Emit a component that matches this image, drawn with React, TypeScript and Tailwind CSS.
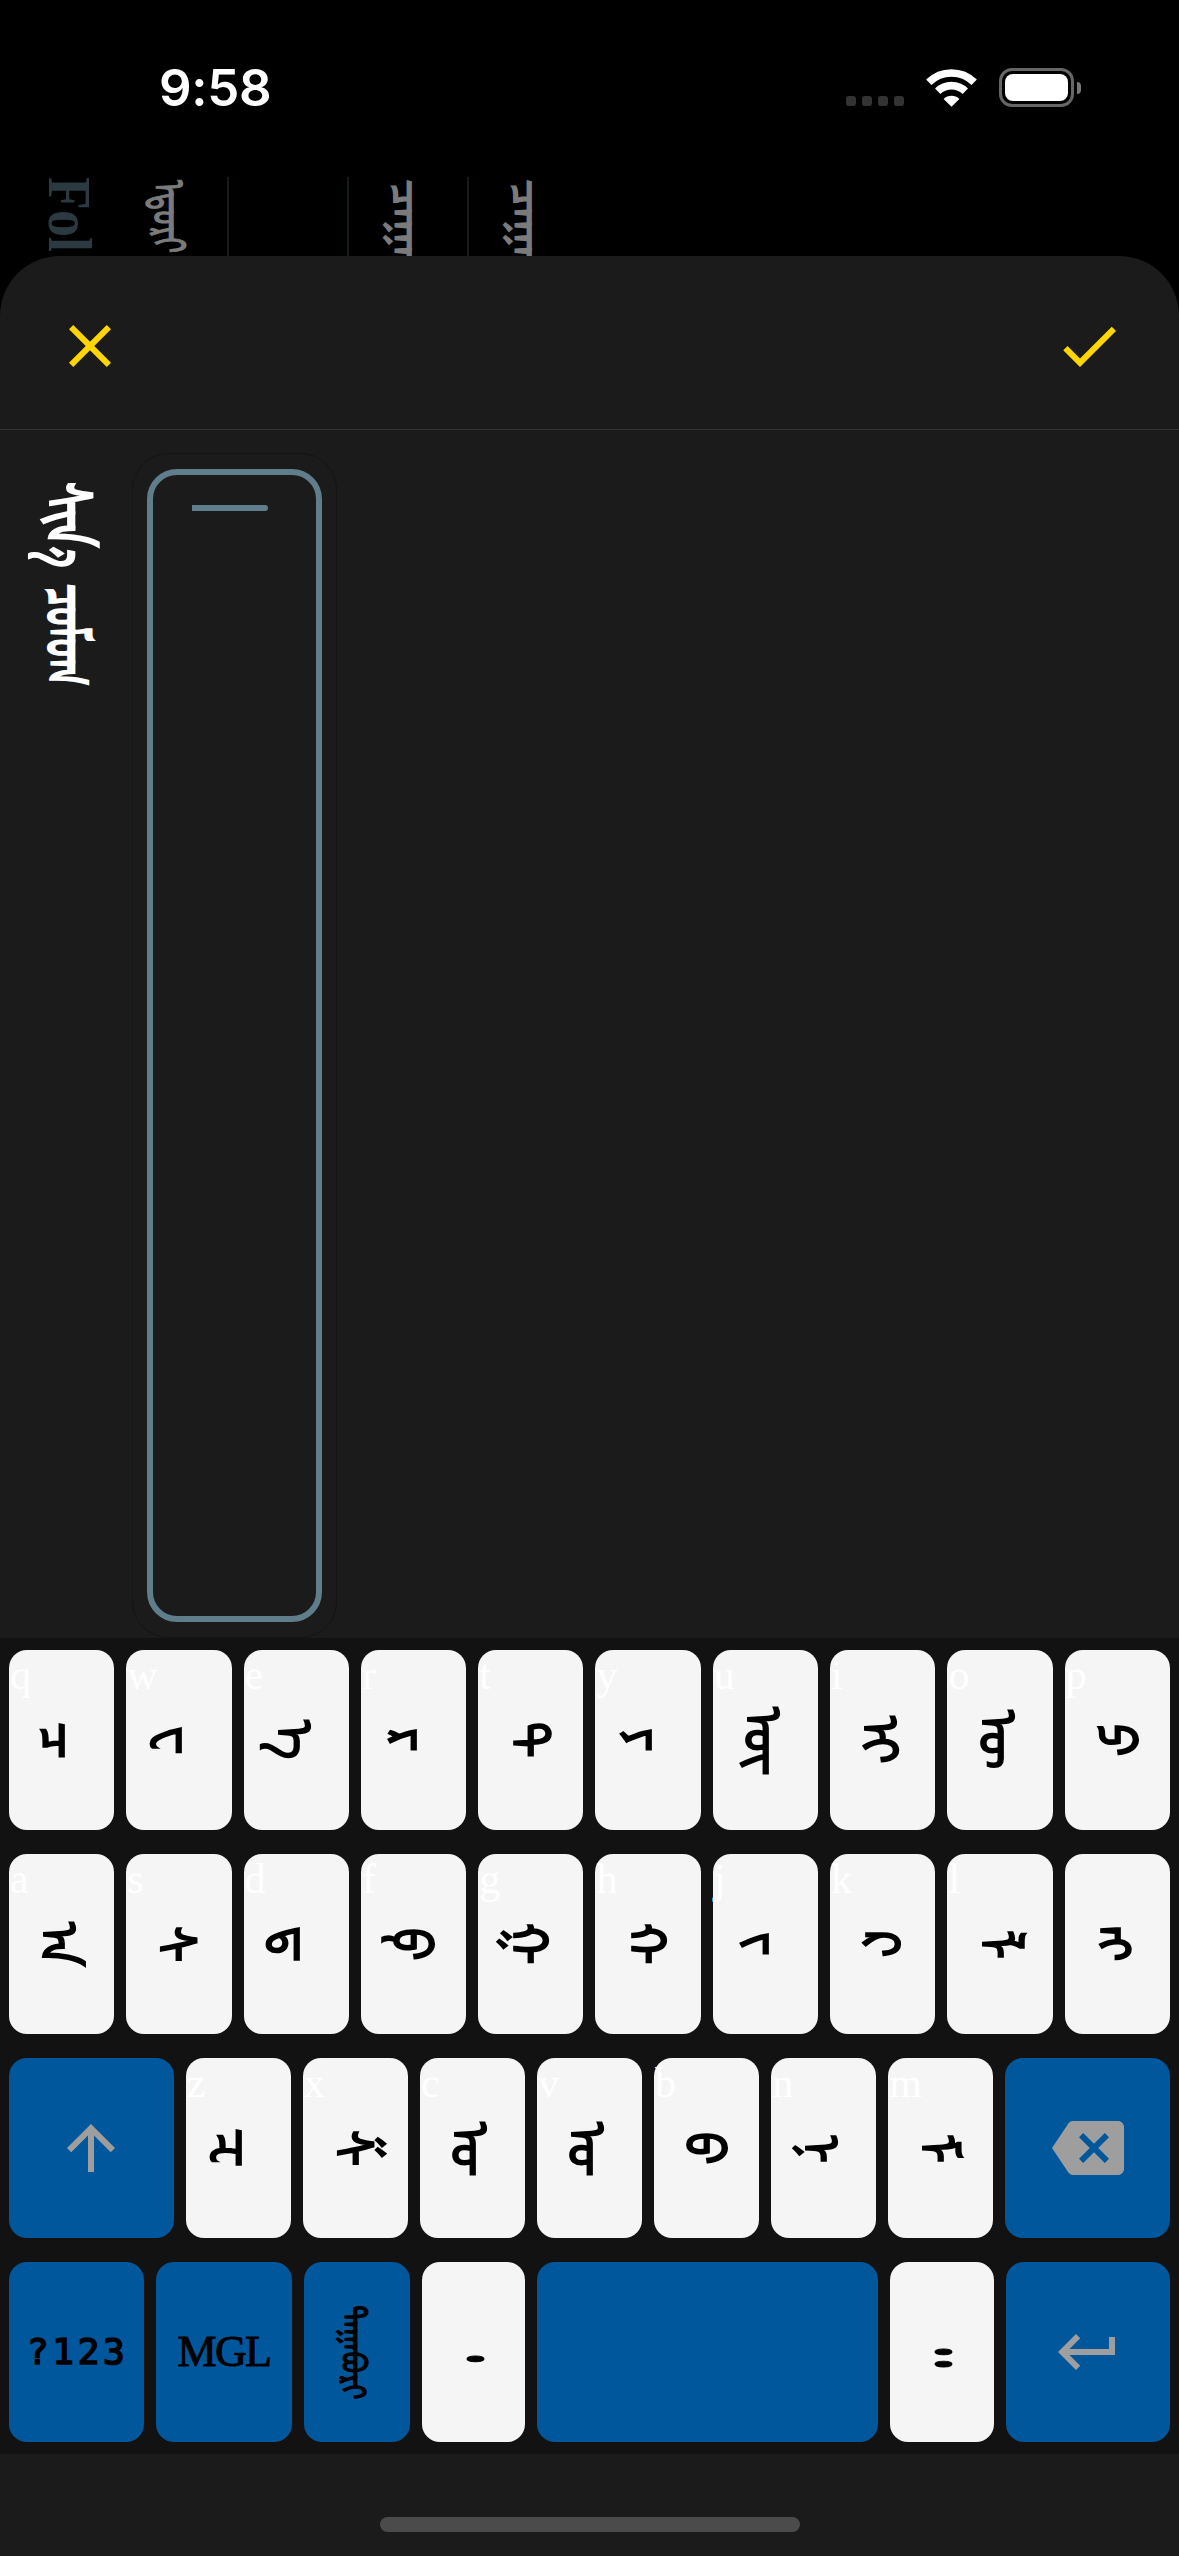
import React from "react";
import { MdArrowUpward, MdBackspace, MdCheck, MdClose, MdKeyboardReturn } from "react-icons/md";

type Letter = { hint: string; glyph: string };

const topRow: Letter[] = [
  { hint: "q", glyph: "ᠴ" },
  { hint: "w", glyph: "ᠸ" },
  { hint: "e", glyph: "ᠡ" },
  { hint: "r", glyph: "ᠷ" },
  { hint: "t", glyph: "ᠲ" },
  { hint: "y", glyph: "ᠶ" },
  { hint: "u", glyph: "ᠦ\u200d" },
  { hint: "i", glyph: "ᠢ" },
  { hint: "o", glyph: "ᠥ" },
  { hint: "p", glyph: "ᠫ" },
];

const homeRow: Letter[] = [
  { hint: "a", glyph: "ᠠ" },
  { hint: "s", glyph: "ᠰ" },
  { hint: "d", glyph: "ᠳ" },
  { hint: "f", glyph: "ᠹ" },
  { hint: "g", glyph: "ᠭ" },
  { hint: "h", glyph: "ᠬ" },
  { hint: "j", glyph: "ᠵ" },
  { hint: "k", glyph: "ᠺ" },
  { hint: "l", glyph: "ᠯ" },
  { hint: "", glyph: "ᠩ" },
];

const bottomRow: Letter[] = [
  { hint: "z", glyph: "ᠽ" },
  { hint: "x", glyph: "ᠱ" },
  { hint: "c", glyph: "ᠣ\u200d" },
  { hint: "v", glyph: "ᠤ\u200d" },
  { hint: "b", glyph: "ᠪ" },
  { hint: "n", glyph: "ᠨ" },
  { hint: "m", glyph: "ᠮ" },
];

function Key({
  width,
  blue = false,
  hint,
  children,
}: {
  width: string;
  blue?: boolean;
  hint?: string;
  children?: React.ReactNode;
}) {
  return (
    <div className={`${width} h-[204px] shrink-0 px-[6px] py-3`}>
      <button
        className={`relative flex h-full w-full items-center justify-center rounded-[18px] ${
          blue ? "bg-[#01579b] text-[#9e9e9e]" : "bg-[#f5f5f5] text-black"
        }`}
      >
        {hint && (
          <span className="absolute left-px top-0 font-['Liberation_Serif',serif] text-[42px] leading-[50px] text-white">
            {hint}
          </span>
        )}
        {children}
      </button>
    </div>
  );
}

function LetterKey({ hint, glyph, width = "w-[117.3px]" }: Letter & { width?: string }) {
  return (
    <Key width={width} hint={hint}>
      <span className="ml-[19px] scale-x-[1.12] font-['Noto_Sans_Mongolian','Noto_Sans',serif] text-[48px] leading-none [-webkit-text-stroke:1.8px_black] [writing-mode:vertical-lr]">
        {glyph}
      </span>
    </Key>
  );
}

function StatusBar() {
  return (
    <div className="flex h-[177px] items-start justify-between pl-[159px] pr-[98px] text-white">
      <div className="mt-[57px] font-[Inter,sans-serif] text-[51px] font-semibold leading-[62px] tracking-[-0.3px]">
        9:58
      </div>
      <div className="mt-[68px] flex h-[39px] items-center">
        <div className="mt-[27px] flex gap-[6px]">
          {[0, 1, 2, 3].map((i) => (
            <i key={i} className="block h-[10px] w-[10px] rounded-[3px] bg-[#333]" />
          ))}
        </div>
        <svg className="ml-[22px] h-[38px] w-[51px]" viewBox="0 0 51 38" fill="none">
          <path d="M2.8 13.3A32.3 32.3 0 0 1 48.2 13.3" stroke="#fff" strokeWidth="7.6" />
          <path d="M11.7 22.3A19.7 19.7 0 0 1 39.3 22.3" stroke="#fff" strokeWidth="7.6" />
          <path d="M17.6 29.9a11.4 11.4 0 0 1 15.8 0L25.5 37.8Z" fill="#fff" />
        </svg>
        <div className="ml-[22px] h-[39px] w-[75px] rounded-[13px] border-[3px] border-[#666] p-[3px]">
          <div className="h-full w-full rounded-[8px] bg-white" />
        </div>
        <div className="ml-[3px] h-[12px] w-[4px] rounded-r-full bg-[#777]" />
      </div>
    </div>
  );
}

function Backdrop() {
  const word =
    "block [writing-mode:vertical-lr] whitespace-nowrap font-['Noto_Sans_Mongolian','Noto_Sans',serif] leading-[60px] text-[#7b7b7b]";
  return (
    <div className="flex h-[79px] overflow-hidden">
      <div className="w-[108px] shrink-0 pl-[33px]">
        <span className="block origin-top scale-y-[0.87] whitespace-nowrap font-['Liberation_Serif',serif] text-[62px] font-bold leading-[73px] text-[#2b3940] [writing-mode:vertical-lr]">
          Fol
        </span>
      </div>
      <div className="w-[121px] shrink-0 border-r-2 border-[#151c20] pl-[41px] pt-[3px]">
        <span className={`${word} origin-top scale-y-[0.64] text-[45px] [-webkit-text-stroke:1.4px_#7b7b7b]`}>
          ᠡᠳᠦᠷᠢ
        </span>
      </div>
      <div className="w-[120px] shrink-0 border-r-2 border-[#151c20]" />
      <div className="w-[120px] shrink-0 border-r-2 border-[#151c20] pl-[38px] pt-[2px]">
        <span className={`${word} text-[45px] [-webkit-text-stroke:1.6px_#7b7b7b]`}>ᠴᠠᠭᠠᠨ</span>
      </div>
      <div className="w-[120px] shrink-0 pl-[38px] pt-[2px]">
        <span className={`${word} text-[45px] [-webkit-text-stroke:1.6px_#7b7b7b]`}>ᠴᠠᠭᠠᠨ</span>
      </div>
    </div>
  );
}

export default function App() {
  const titleWord =
    "block origin-top scale-x-[1.3] whitespace-nowrap font-['Noto_Sans_Mongolian','Noto_Sans',serif] text-[48px] leading-[72px] text-white [-webkit-text-stroke:2.4px_white] [writing-mode:vertical-lr]";
  return (
    <div className="flex h-[2556px] w-[1179px] flex-col overflow-hidden bg-black">
      <StatusBar />
      <Backdrop />
      <main className="flex flex-1 flex-col rounded-t-[60px] bg-[#1b1b1b]">
        <header className="flex h-[174px] shrink-0 items-center justify-between border-b border-[#353535] px-[54px] pb-0 pt-1.5 text-[72px] text-[#ffd600]">
          <MdClose />
          <MdCheck />
        </header>
        <section className="flex h-[1208px] shrink-0 items-start">
          <div className="flex w-[132px] shrink-0 flex-col items-start pl-[46px] pt-[52px]">
            <div className="h-[102px]">
              <span className={`${titleWord} scale-y-[0.92]`}>ᠰᠢᠨ᠎ᠡ</span>
            </div>
            <div>
              <span className={`${titleWord} scale-y-[0.76]`}>ᠴᠣᠮᠣᠭ</span>
            </div>
          </div>
          <div className="mt-[23px] h-[1185px] w-[205px] rounded-[36px] border border-[#141414] px-[14px] py-[15px]">
            <div className="flex h-full w-full justify-center rounded-[30px] border-[6px] border-[#607d8b]">
              <div className="-ml-[10px] mt-[30px] h-[6px] w-[76px] rounded-r-full bg-[#607d8b]" />
            </div>
          </div>
        </section>
        <section className="flex h-[816px] shrink-0 flex-col bg-[#121212] px-[3px]">
          <div className="flex">
            {topRow.map((k) => (
              <LetterKey key={k.glyph} {...k} />
            ))}
          </div>
          <div className="flex">
            {homeRow.map((k) => (
              <LetterKey key={k.glyph} {...k} />
            ))}
          </div>
          <div className="flex">
            <Key width="w-[176.7px]" blue>
              <MdArrowUpward className="text-[72px]" />
            </Key>
            {bottomRow.map((k) => (
              <LetterKey key={k.glyph} {...k} width="w-[117.1px]" />
            ))}
            <Key width="w-[176.5px]" blue>
              <MdBackspace className="text-[72px]" />
            </Key>
          </div>
          <div className="flex">
            <Key width="w-[147.3px]" blue>
              <span className="ml-[2px] font-['DejaVu_Sans_Mono',monospace] text-[36px] tracking-[3.6px] text-black [-webkit-text-stroke:1.7px_black]">
                ?123
              </span>
            </Key>
            <Key width="w-[147.3px]" blue>
              <span className="font-['Liberation_Serif',serif] text-[44px] tracking-[-1.7px] text-black [-webkit-text-stroke:1px_black]">
                MGL
              </span>
            </Key>
            <Key width="w-[118px]" blue>
              <span className="ml-[8px] scale-x-[1.1] scale-y-[0.88] font-['Noto_Sans_Mongolian','Noto_Sans',serif] text-[30px] leading-none text-black [-webkit-text-stroke:1.5px_black] [writing-mode:vertical-lr]">
                ᠲᠠᠭᠠᠪᠤᠷᠢ
              </span>
            </Key>
            <Key width="w-[115.3px]">
              <span className="-ml-[2px] scale-x-[2.5] text-[48px] leading-none [-webkit-text-stroke:0.8px_black] [writing-mode:vertical-lr]">
                ᠂
              </span>
            </Key>
            <Key width="w-[353px]" blue />
            <Key width="w-[116px]">
              <span className="-ml-[4px] scale-x-[2.5] text-[48px] leading-none [-webkit-text-stroke:0.8px_black] [writing-mode:vertical-lr]">
                ᠃
              </span>
            </Key>
            <Key width="w-[176px]" blue>
              <MdKeyboardReturn className="text-[72px]" />
            </Key>
          </div>
        </section>
        <footer className="flex h-[102px] shrink-0 items-end justify-center pb-6">
          <div className="h-[15px] w-[420px] rounded-full bg-[#4b4b4b]" />
        </footer>
      </main>
    </div>
  );
}
